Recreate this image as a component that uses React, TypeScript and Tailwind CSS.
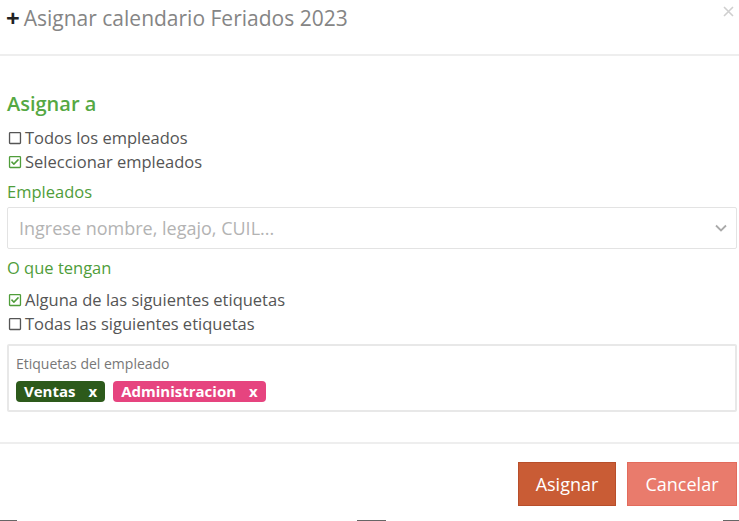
import { FaRegSquare, FaRegCheckSquare } from "react-icons/fa";

function Check({ checked, label }: { checked?: boolean; label: string }) {
  return (
    <label className="flex h-6 items-center text-[16.5px] text-[#555]">
      {checked ? (
        <FaRegCheckSquare className="ml-[1px] mr-[3px] h-[14px] w-[14px] text-[#4f9d3a]" />
      ) : (
        <FaRegSquare className="ml-[1px] mr-[3px] h-[14px] w-[14px] text-[#555]" />
      )}
      {label}
    </label>
  );
}

export default function App() {
  return (
    <div className="relative h-[521px] w-[739px] overflow-hidden bg-white font-['Open_Sans',sans-serif]">
      <div className="flex h-[56px] items-start justify-between border-b-2 border-[#eeeeee] pl-[6px] pr-[4px] pt-[4px]">
        <h4 className="flex items-center text-[21px] leading-[28px] text-[#858585]">
          <span className="mr-[4px] text-[24px] font-bold leading-none text-[#222]">+</span>
          Asignar calendario Feriados 2023
        </h4>
        <svg className="mr-[1px] mt-[2px]" width="11" height="11" viewBox="0 0 11 11" stroke="#cfcfcf" strokeWidth="1.6">
          <path d="M1 1l9 9M10 1l-9 9" />
        </svg>
      </div>

      <div className="pl-[7px] pr-[2px] pt-[34px]">
        <h3 className="text-[20px] font-semibold leading-[28px] text-[#55a843]">Asignar a</h3>
        <div className="mt-[8px]">
          <Check label="Todos los empleados" />
          <Check checked label="Seleccionar empleados" />
        </div>
        <p className="mt-[8px] text-[16.5px] leading-[20px] text-[#4f9d3a]">Empleados</p>
        <div className="mt-[5px] flex h-[42px] items-center justify-between rounded-[2px] border border-[#e3e3e3] pl-[11px] pr-[9px]">
          <span className="text-[18px] text-[#b3b3b3]">Ingrese nombre, legajo, CUIL...</span>
          <svg width="12" height="8" viewBox="0 0 12 8" fill="none" stroke="#aaa" strokeWidth="1.8">
            <path d="M1 1.5l5 5 5-5" />
          </svg>
        </div>
        <p className="mt-[9px] text-[16.5px] leading-[20px] text-[#4f9d3a]">O que tengan</p>
        <div className="mt-[10px]">
          <Check checked label="Alguna de las siguientes etiquetas" />
          <Check label="Todas las siguientes etiquetas" />
        </div>
        <div className="mt-[8px] h-[68px] rounded-[2px] border-2 border-[#e8e8e8] px-[7px] pt-[9px]">
          <p className="text-[14px] leading-[18px] text-[#777]">Etiquetas del empleado</p>
          <div className="mt-[8px] flex gap-[8px]">
            <span className="flex h-[21px] items-center rounded-[4px] bg-[#2d5a1b] px-[8px] text-[15px] font-bold text-white">
              Ventas<span className="ml-[13px]">x</span>
            </span>
            <span className="flex h-[21px] items-center rounded-[4px] bg-[#e6447f] px-[8px] text-[15px] font-bold text-white">
              Administracion<span className="ml-[13px]">x</span>
            </span>
          </div>
        </div>
      </div>

      <div className="mt-[30px] flex justify-end gap-[11px] border-t-2 border-[#eeeeee] pr-[2px] pt-[18px]">
        <button className="h-[44px] w-[98px] border border-[#b84e2a] bg-[#c95c35] text-[18px] text-white">
          Asignar
        </button>
        <button className="h-[44px] w-[110px] border border-[#e36b5c] bg-[#e97b6c] text-[18px] text-white">
          Cancelar
        </button>
      </div>

      <div className="absolute bottom-0 left-0 h-[1px] w-[17px] bg-[#666]" />
      <div className="absolute bottom-0 left-[357px] h-[1px] w-[29px] bg-[#666]" />
      <div className="absolute bottom-0 right-0 h-[1px] w-[16px] bg-[#666]" />
    </div>
  );
}
